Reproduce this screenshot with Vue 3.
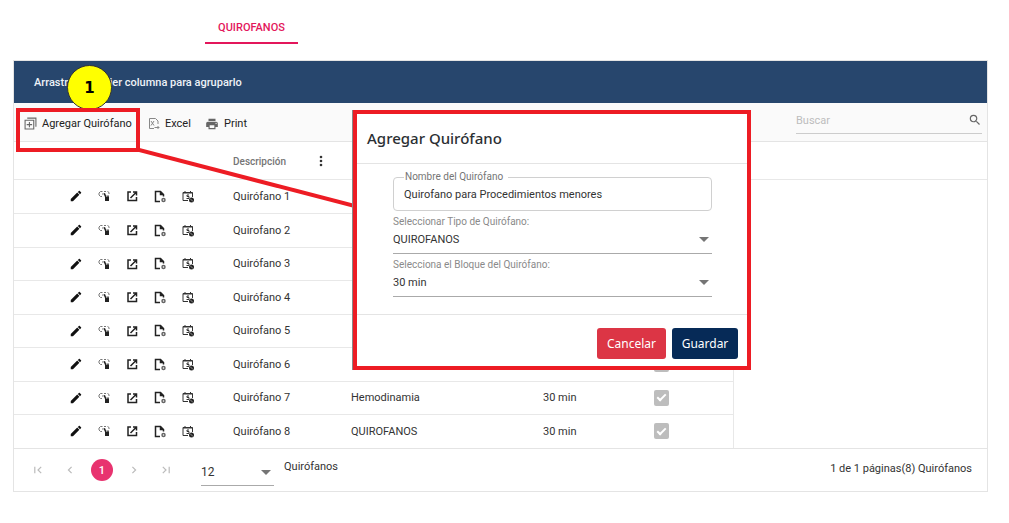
<script setup>
import { ref } from 'vue'

const rows = ref([
  { name: 'Quirófano 1', type: '', block: '' },
  { name: 'Quirofano 2', type: '', block: '' },
  { name: 'Quirófano 3', type: '', block: '' },
  { name: 'Quirófano 4', type: '', block: '' },
  { name: 'Quirofano 5', type: '', block: '' },
  { name: 'Quirófano 6', type: '', block: '' },
  { name: 'Quirófano 7', type: 'Hemodinamia', block: '30 min' },
  { name: 'Quirófano 8', type: 'QUIROFANOS', block: '30 min' },
])
const newName = ref('Quirofano para Procedimientos menores')
</script>

<template>
  <div class="page">
    <nav class="tabs">
      <a class="tab" href="#quirofanos">QUIROFANOS</a>
    </nav>

    <main class="grid">
      <div class="group-bar">Arrastre cualquier columna para agruparlo</div>

      <div class="toolbar">
        <button class="tool add" type="button">
          <svg viewBox="0 0 24 24" width="13" height="13" fill="none" stroke="#666" stroke-width="2">
            <path d="M2 6h16v16H2zM6 2h16v16M10 9v10M5 14h10" />
          </svg>
          Agregar Quirófano
        </button>
        <button class="tool excel" type="button">
          <svg viewBox="0 0 24 24" width="12" height="13" fill="none" stroke="#888" stroke-width="2">
            <path d="M20 13V7l-5-5H3v20h9M6 7l6 9M12 7l-6 9M13 20h9M19 17l3 3-3 3" />
          </svg>
          Excel
        </button>
        <button class="tool" type="button">
          <svg viewBox="0 0 24 24" width="14" height="14" fill="#666">
            <path d="M19 8H5c-1.7 0-3 1.300-3 3v6h4v4h12v-4h4v-6c0-1.700-1.300-3-3-3zm-3 11H8v-5h8v5zm3-7c-.6 0-1-.4-1-1s.4-1 1-1 1 .4 1 1-.4 1-1 1zM18 3H6v4h12V3z" />
          </svg>
          Print
        </button>
        <div class="search">
          <input type="text" placeholder="Buscar" aria-label="Buscar" />
          <button type="button" aria-label="Buscar en la tabla">
            <svg viewBox="0 0 24 24" width="14" height="14" fill="#666">
              <path d="M15.500 14h-.79l-.28-.27A6.470 6.470 0 0 0 16 9.500 6.500 6.500 0 1 0 9.500 16c1.610 0 3.090-.59 4.230-1.570l.27.28v.79l5 4.990L20.490 19l-4.990-5zm-6 0C7.010 14 5 11.990 5 9.500S7.010 5 9.500 5 14 7.010 14 9.500 11.990 14 9.500 14z" />
            </svg>
          </button>
        </div>
      </div>

      <div class="table-area">
        <table>
          <colgroup>
            <col class="c-cmd" /><col class="c-desc" /><col class="c-type" /><col class="c-block" /><col />
          </colgroup>
          <thead>
            <tr>
              <th></th>
              <th>
                <div class="head-cell">
                  Descripción
                  <button type="button" class="dots" aria-label="Menú de columna">
                    <svg viewBox="0 0 4 12" width="4" height="12" fill="#333">
                      <circle cx="2" cy="2" r="1.300" /><circle cx="2" cy="6" r="1.300" /><circle cx="2" cy="10" r="1.300" />
                    </svg>
                  </button>
                </div>
              </th>
              <th></th><th></th><th></th>
            </tr>
          </thead>
          <tbody>
            <tr v-for="row in rows" :key="row.name">
              <td>
                <div class="commands">
                  <button type="button" aria-label="Editar">
                    <svg viewBox="0 0 24 24" width="14" height="14" fill="#111">
                      <path d="M3 17.200V21h3.800L17.800 9.900l-3.700-3.700L3 17.200zM20.700 7c.4-.4.4-1 0-1.400l-2.300-2.300c-.4-.4-1-.4-1.400 0l-1.900 1.800 3.800 3.800L20.700 7z" />
                    </svg>
                  </button>
                  <button type="button" aria-label="Asignar">
                    <svg viewBox="0 0 24 24" width="12" height="12">
                      <path d="M8 13H5L2 10V6l3-3h4M12 3h4M19 3l3 2v3M8 8h3" fill="none" stroke="#777" stroke-width="2" />
                      <path d="M11 7l3-1 2 5h6v11h-8v-8l-3-7z" fill="#222" />
                      <path d="M17 10v4M20 10v4" stroke="#fff" />
                    </svg>
                  </button>
                  <button type="button" aria-label="Abrir">
                    <svg viewBox="0 0 24 24" width="12" height="12" fill="none" stroke="#222" stroke-width="3">
                      <path d="M10 4H4v17h17v-7M14 4h7v7M21 4L9 16" />
                    </svg>
                  </button>
                  <button type="button" aria-label="Documento">
                    <svg viewBox="0 0 24 24" width="12" height="13" fill="none" stroke="#222" stroke-width="3">
                      <path d="M12 22H3V2h10l6 6v4M13 2v6h6" />
                      <circle cx="19" cy="19" r="3" stroke="#666" stroke-width="3" />
                    </svg>
                  </button>
                  <button type="button" aria-label="Agenda">
                    <svg viewBox="0 0 24 24" width="12" height="13" fill="none" stroke="#333" stroke-width="2">
                      <path d="M12 20H2V4h19v9M2 5h19M6 1v3M17 1v3M14 9h-4v3h4v4h-5" />
                      <circle cx="19" cy="19" r="5" fill="#222" stroke="none" />
                      <path d="M16 16l6 6" stroke="#fff" stroke-width="1" />
                    </svg>
                  </button>
                </div>
              </td>
              <td>{{ row.name }}</td>
              <td>{{ row.type }}</td>
              <td>{{ row.block }}</td>
              <td class="check-cell">
                <input type="checkbox" checked disabled :aria-label="'Activo ' + row.name" />
              </td>
            </tr>
          </tbody>
        </table>
      </div>

      <footer class="pager">
        <div class="pages">
          <button type="button" aria-label="Primera página">
            <svg viewBox="0 0 10 10" width="8" height="8"><path d="M1 1v8M9 1L5 5l4 4" /></svg>
          </button>
          <button type="button" aria-label="Página anterior">
            <svg viewBox="0 0 10 10" width="8" height="8"><path d="M7 1L3 5l4 4" /></svg>
          </button>
          <button type="button" class="current">1</button>
          <button type="button" aria-label="Página siguiente">
            <svg viewBox="0 0 10 10" width="8" height="8"><path d="M3 1l4 4-4 4" /></svg>
          </button>
          <button type="button" aria-label="Última página">
            <svg viewBox="0 0 10 10" width="8" height="8"><path d="M9 1v8M1 1l4 4-4 4" /></svg>
          </button>
        </div>
        <div class="select size">
          <select id="page-size"><option>12</option></select>
        </div>
        <label class="size-label" for="page-size">Quirófanos</label>
        <span class="summary">1 de 1 páginas(8) Quirófanos</span>
      </footer>
    </main>

    <div class="marker">1</div>
    <div class="highlight"></div>
    <svg class="connector" viewBox="0 0 216 60" width="216" height="60">
      <path d="M0 2L216 58" stroke="#ed1c24" stroke-width="4" />
    </svg>

    <section class="dialog" role="dialog" aria-labelledby="dialog-title">
      <h2 id="dialog-title">Agregar Quirófano</h2>
      <div class="form">
        <fieldset class="outlined">
          <legend><label for="room-name">Nombre del Quirófano</label></legend>
          <input id="room-name" v-model="newName" type="text" />
        </fieldset>
        <label class="caption" for="room-type">Seleccionar Tipo de Quirófano:</label>
        <div class="select">
          <select id="room-type"><option>QUIROFANOS</option></select>
        </div>
        <label class="caption" for="room-block">Selecciona el Bloque del Quirófano:</label>
        <div class="select">
          <select id="room-block"><option>30 min</option></select>
        </div>
      </div>
      <div class="actions">
        <button type="button" class="cancel">Cancelar</button>
        <button type="button" class="save">Guardar</button>
      </div>
    </section>
  </div>
</template>

<style>
body {
  background: #fff;
}
</style>

<style scoped>
.page {
  position: relative;
  padding: 12px 21px 0 13px;
  font-family: Roboto, "Liberation Sans", sans-serif;
  font-size: 11px;
  color: #333;
}
.page *,
.page {
  box-sizing: border-box;
}
button,
input,
select {
  font: inherit;
  color: inherit;
  margin: 0;
  padding: 0;
  border: 0;
  background: none;
  outline: 0;
}
svg {
  display: block;
}
.tabs {
  display: flex;
  height: 32px;
  margin: 0 0 16px 192px;
}
.tab {
  display: flex;
  align-items: center;
  justify-content: center;
  width: 93px;
  border-bottom: 2px solid #e3165b;
  color: #e3165b;
  font-size: 11px;
  font-weight: 500;
  text-decoration: none;
}
.grid {
  border: 1px solid #e4e4e4;
}
.group-bar {
  display: flex;
  align-items: center;
  height: 42px;
  padding-left: 20px;
  background: #27466d;
  color: #eef2f7;
  font-weight: 500;
}
.toolbar {
  display: flex;
  align-items: center;
  height: 39px;
  padding: 3px 5px 0 10px;
  border-bottom: 1px solid #e4e4e4;
  background: #fafafa;
}
.tool {
  display: flex;
  align-items: center;
  gap: 5px;
  color: #222;
  white-space: nowrap;
}
.add {
  width: 124px;
}
.excel {
  width: 57px;
}
.search {
  display: flex;
  align-items: center;
  justify-content: space-between;
  width: 186px;
  height: 27px;
  margin: 0 0 6px auto;
  border-bottom: 1px solid #ccc;
}
.search input {
  flex: 1;
  min-width: 0;
}
.search input::placeholder {
  color: #bdbdbd;
  opacity: 1;
}
table {
  width: 74%;
  border-collapse: collapse;
  table-layout: fixed;
}
.c-cmd {
  width: 209px;
}
.c-desc {
  width: 118px;
}
.c-type {
  width: 192px;
}
.c-block {
  width: 97px;
}
.table-area {
  border-bottom: 1px solid #e4e4e4;
  background: linear-gradient(#e8e8e8, #e8e8e8) 0 37px / 100% 1px no-repeat;
}
th,
td {
  padding: 0 0 0 10px;
  text-align: left;
  white-space: nowrap;
}
th {
  height: 38px;
  color: #757575;
  font-size: 10px;
  font-weight: 500;
}
.head-cell {
  display: flex;
  align-items: center;
  justify-content: space-between;
  padding-right: 18px;
}
tbody tr {
  height: 33px;
}
tbody tr:nth-child(even) {
  height: 34px;
}
tbody tr + tr td {
  border-top: 1px solid #e8e8e8;
}
tbody td:last-child {
  border-right: 1px solid #e8e8e8;
}
.commands {
  display: grid;
  grid-template-columns: repeat(5, 28px);
  margin-left: 38px;
}
.commands button {
  display: flex;
  align-items: center;
  justify-content: center;
}
.check-cell input {
  display: flex;
  align-items: center;
  justify-content: center;
  appearance: none;
  width: 15px;
  height: 16px;
  margin-left: 14px;
  border-radius: 2px;
  background: #bdbdbd;
}
.check-cell input::after {
  content: "";
  width: 3px;
  height: 7px;
  margin-bottom: 2px;
  border: solid #fff;
  border-width: 0 2px 2px 0;
  transform: rotate(45deg);
}
.pager {
  display: flex;
  align-items: center;
  height: 42px;
  padding: 0 15px 0 8px;
}
.pages {
  display: grid;
  grid-template-columns: repeat(5, 32px);
  align-items: center;
  justify-items: center;
}
.pages path {
  fill: none;
  stroke: #bbb;
  stroke-width: 1.5;
}
.current {
  width: 22px;
  height: 22px;
  border-radius: 11px;
  background: #e8336f;
  color: #fff;
  font-weight: 500;
}
.select {
  position: relative;
  border-bottom: 1px solid #aaa;
}
.select::after {
  content: "";
  position: absolute;
  top: 50%;
  right: 3px;
  margin-top: -2px;
  border: solid transparent;
  border-width: 5px 5px 0;
  border-top-color: #757575;
  pointer-events: none;
}
.select select {
  display: block;
  width: 100%;
  height: 27px;
  appearance: none;
}
.form .select::after {
  margin-top: -5px;
}
.size {
  width: 73px;
  margin: 4px 0 0 19px;
}
.size select {
  font-size: 12px;
}
.size-label {
  margin: 0 0 7px 10px;
}
.summary {
  margin: 0 0 4px auto;
}
.marker {
  position: absolute;
  top: 65px;
  left: 67px;
  display: flex;
  align-items: center;
  justify-content: center;
  width: 45px;
  height: 45px;
  border: 1px solid #333;
  border-radius: 50%;
  background: #ff0;
  color: #000;
  font: bold 15px "DejaVu Sans", sans-serif;
}
.highlight {
  position: absolute;
  top: 108px;
  left: 16px;
  width: 124px;
  height: 44px;
  border: 4px solid #ed1c24;
}
.connector {
  position: absolute;
  top: 148px;
  left: 139px;
}
.dialog {
  position: absolute;
  top: 110px;
  left: 353px;
  width: 398px;
  border: 4px solid #ed1c24;
  background: #fff;
  box-shadow: -1px 0 0 #888;
}
.dialog h2 {
  display: flex;
  align-items: center;
  height: 50px;
  margin: 0;
  padding: 0 10px 2px;
  border-bottom: 1px solid #e4e4e4;
  color: #2b2f33;
  font: 500 15px "Noto Sans", sans-serif;
}
.form {
  padding: 8px 35px 17px 36px;
}
.outlined {
  height: 39px;
  min-width: 0;
  margin: 0;
  padding: 0 10px;
  border: 1px solid #d0d0d0;
  border-radius: 4px;
}
.outlined legend {
  padding: 0 5px 0 1px;
  color: #757575;
  font-size: 10px;
  line-height: 10px;
}
.outlined input {
  display: block;
  width: 100%;
  height: 24px;
}
.caption {
  display: block;
  height: 19px;
  padding-top: 3px;
  color: #8a8a8a;
  font-size: 10px;
  line-height: 15px;
}
.form .select select {
  height: 23px;
  padding-bottom: 4px;
}
.actions {
  display: flex;
  justify-content: flex-end;
  gap: 6px;
  padding: 13px 9px 7px;
  border-top: 1px solid #e4e4e4;
}
.actions button {
  height: 31px;
  border-radius: 3px;
  color: #fff;
  font: 12px "Noto Sans", sans-serif;
}
.actions .cancel {
  width: 69px;
  background: #dc3545;
}
.actions .save {
  width: 66px;
  background: #062a57;
}
</style>
